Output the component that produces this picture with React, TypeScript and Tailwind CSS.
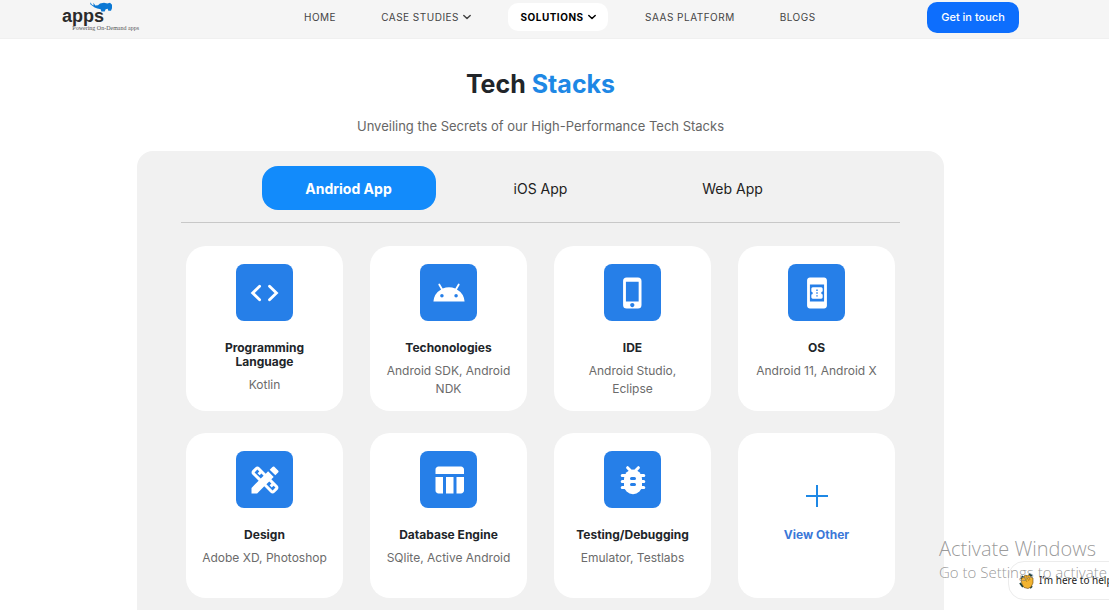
import type { ReactNode } from "react";
import {
  MdAndroid,
  MdBookOnline,
  MdDesignServices,
  MdPhoneIphone,
  MdTableChart,
} from "react-icons/md";

type Stack = { title: string; detail: string; icon: ReactNode };

function Chevron() {
  return (
    <svg viewBox="0 0 10 10" className="h-2 w-2" fill="none" stroke="currentColor" strokeWidth="1.8" strokeLinecap="round" strokeLinejoin="round" aria-hidden="true">
      <path d="M1 3l4 4 4-4" />
    </svg>
  );
}

function CodeIcon() {
  return (
    <svg viewBox="0 0 24 24" className="h-[34px] w-[34px]" fill="none" stroke="currentColor" strokeWidth="2" strokeLinecap="round" strokeLinejoin="miter" aria-hidden="true">
      <path d="M8.2 7.2L3.3 12l4.9 4.8M15.2 7.2l4.9 4.8-4.9 4.8" />
    </svg>
  );
}

function BugIcon() {
  return (
    <svg viewBox="0 0 24 24" className="h-9 w-9" aria-hidden="true">
      <g stroke="currentColor" strokeWidth="2" strokeLinecap="round" fill="none">
        <path d="M8.4 3.8l2.2 2.2M15.6 3.8L13.4 6M4.8 9h14.4M4.8 13h14.4M4.8 17h14.4" />
      </g>
      <rect x="6" y="5" width="12" height="16.5" rx="6" fill="currentColor" />
      <path d="M11 11h2M11 15h2" stroke="#267fe8" strokeWidth="2" strokeLinecap="round" />
    </svg>
  );
}

function Logo() {
  return (
    <a href="#home" className="flex w-[77px] flex-col text-[#2b2b2b]">
      <span className="relative font-['Liberation_Sans'] text-[18px] leading-[17px] font-bold">
        apps
        <svg viewBox="0 0 66 32" className="absolute -top-[7px] left-7 h-[11px] w-[22px]" fill="#0b78d4" aria-hidden="true">
          <path d="M1 3l5 8 5 2-1-8 6 8 8-1 6-5 12-2 10 2 8-2 6 6v10l-3 8h-8l-2-6-6 1-3 7h-10l-2-7-10-2-8-3-7-5-6-5z" />
        </svg>
      </span>
      <span className="self-end whitespace-nowrap font-['Liberation_Serif'] text-[6px] leading-[7px] text-[#555]">Powering On-Demand apps</span>
    </a>
  );
}

const stacks: Stack[] = [
  { title: "Programming Language", detail: "Kotlin", icon: <CodeIcon /> },
  { title: "Techonologies", detail: "Android SDK, Android NDK", icon: <MdAndroid size={34} /> },
  { title: "IDE", detail: "Android Studio, Eclipse", icon: <MdPhoneIphone size={34} /> },
  { title: "OS", detail: "Android 11, Android X", icon: <MdBookOnline size={34} /> },
  { title: "Design", detail: "Adobe XD, Photoshop", icon: <MdDesignServices size={36} /> },
  { title: "Database Engine", detail: "SQlite, Active Android", icon: <MdTableChart size={36} /> },
  { title: "Testing/Debugging", detail: "Emulator, Testlabs", icon: <BugIcon /> },
];

function StackCard({ title, detail, icon }: Stack) {
  return (
    <article className="flex min-h-[165px] flex-col items-center rounded-[20px] bg-white px-4 pt-[18px] text-center">
      <div className="flex h-[57px] w-[57px] shrink-0 items-center justify-center rounded-lg bg-[#267fe8] text-white">{icon}</div>
      <h2 className="-mx-2 mt-5 max-w-[120px] text-[12px] leading-[14px] font-bold text-[#212529]">{title}</h2>
      <p className="-mx-2 mt-[7px] max-w-[130px] text-[12px] leading-[18px] text-[#6b6b6b]">{detail}</p>
    </article>
  );
}

function WavingHand() {
  return (
    <svg viewBox="0 0 16 16" className="h-4 w-4 shrink-0" aria-hidden="true">
      <path d="M2 6l2-3M10 1l3 2M1 10l3 4M13 13l-2 2" fill="none" stroke="#17413e" strokeWidth="2" />
      <path d="M2 7l1-2 2-1V3l2-1 1 1 2-1 2 2 2 1v5l-2 4-3 1.5-4-1L3 11z" fill="#f2b431" stroke="#65430d" strokeWidth=".6" />
      <path d="M5 4l3 5M7 3l3 5M9.5 3.5L11 7" stroke="#9a6712" strokeWidth=".6" />
    </svg>
  );
}

export default function App() {
  return (
    <div className="relative min-h-screen overflow-hidden bg-white font-['Inter',sans-serif]">
      <header className="flex h-[39px] items-start border-b border-[#f0f0f0] bg-[#f5f5f5] pr-[90px] pl-[62px]">
        <div className="pt-2">
          <Logo />
        </div>
        <nav className="ml-[165px] flex h-[34px] items-center text-[10px] leading-4 tracking-wider whitespace-nowrap text-[#444]">
          <a href="#home">HOME</a>
          <button type="button" className="ml-[45px] flex items-center gap-1 tracking-wider">CASE STUDIES <Chevron /></button>
          <button type="button" className="ml-[37px] flex h-7 w-[100px] items-center justify-center gap-1 rounded-[10px] bg-white font-bold tracking-wider text-black">SOLUTIONS <Chevron /></button>
          <a href="#saas" className="ml-[37px]">SAAS PLATFORM</a>
          <a href="#blogs" className="ml-[45px]">BLOGS</a>
        </nav>
        <button type="button" className="mt-[2px] ml-auto h-[31px] w-[92px] rounded-[10px] bg-[#0d6efd] text-[11px] font-medium whitespace-nowrap text-white">Get in touch</button>
      </header>

      <main className="pr-7">
        <div className="pt-[29px] text-center">
          <h1 className="text-[25px] leading-8 font-bold text-[#212529]">
            Tech <span className="text-[#1e88e5]">Stacks</span>
          </h1>
          <p className="mt-4 text-[13px] leading-5 text-[#666]">Unveiling the Secrets of our High-Performance Tech Stacks</p>
        </div>

        <section className="mx-auto mt-[15px] max-w-[807px] rounded-t-2xl bg-[#f1f1f1] px-11 pt-[15px] pb-3">
          <div role="tablist" aria-label="Platform" className="flex justify-center gap-[18px] border-b border-[#c8c8c8] pb-3 text-[14px] text-[#212121]">
            <button type="button" role="tab" aria-selected="true" className="h-11 w-[174px] rounded-2xl bg-[#128bfb] font-bold text-white">Andriod App</button>
            <button type="button" role="tab" aria-selected="false" className="h-11 w-[174px]">iOS App</button>
            <button type="button" role="tab" aria-selected="false" className="h-11 w-[174px]">Web App</button>
          </div>
          <div className="grid grid-cols-4 gap-x-[27px] gap-y-[22px] px-[5px] pt-[23px]">
            {stacks.map((s) => (
              <StackCard key={s.title} {...s} />
            ))}
            <button type="button" className="flex flex-col items-center justify-center gap-5 rounded-[20px] bg-white pb-1 text-[12px] leading-4 font-bold text-[#3b78d8]">
              <svg viewBox="0 0 22 22" className="h-[22px] w-[22px]" stroke="#1e88e5" strokeWidth="2" aria-hidden="true">
                <path d="M11 0v22M0 11h22" />
              </svg>
              View Other
            </button>
          </div>
        </section>
      </main>

      <button type="button" className="absolute right-[-48px] bottom-[10px] flex h-[39px] w-[149px] items-center gap-1 rounded-2xl border border-[#ececec] bg-white pl-[10px] font-['Noto_Sans',sans-serif] text-[10px] whitespace-nowrap text-[#222]">
        <WavingHand />
        I’m here to help
      </button>

      <aside className="pointer-events-none absolute bottom-[27px] left-[calc(100%-170px)] font-['Open_Sans',sans-serif] font-light whitespace-nowrap text-[#808080]/80">
        <p className="text-[20px] leading-6">Activate Windows</p>
        <p className="text-[15px] leading-[22px]">Go to Settings to activate Windows.</p>
      </aside>
    </div>
  );
}
